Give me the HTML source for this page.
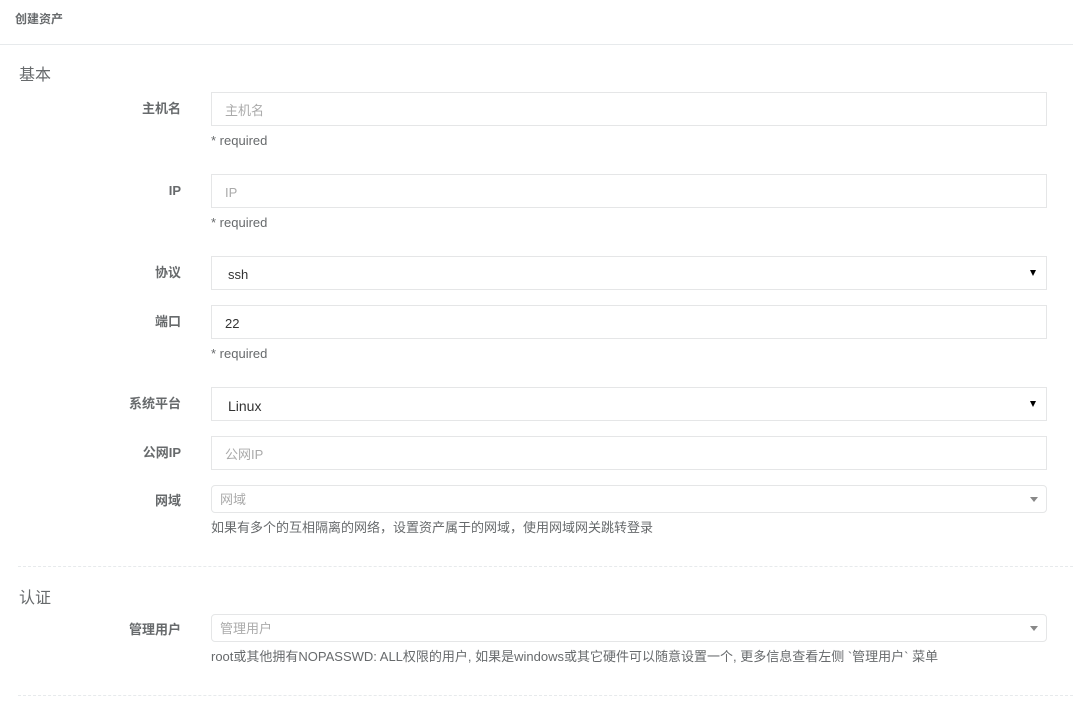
<!DOCTYPE html><html><head><meta charset="utf-8"><style>
body{margin:0;width:1073px;height:701px;background:#fff;font-family:"Liberation Sans","Noto Sans CJK SC",sans-serif;color:#676a6c;font-size:13px;position:relative;overflow:hidden}
.a{position:absolute}
.lbl{position:absolute;right:892px;font-weight:bold;font-size:13px;color:#676a6c;line-height:16px}
.in{position:absolute;left:211px;border:1px solid #e5e6e7;background:#fff;box-sizing:border-box;width:836px;padding-left:13px;font-size:13px;color:#333}
.ph{color:#aaa}
.req{position:absolute;left:211px;font-size:13px;color:#676a6c;line-height:16px}
.tri{position:absolute;right:10px;top:50%;margin-top:-3px;width:0;height:0;border-left:3.5px solid transparent;border-right:3.5px solid transparent;border-top:6px solid #000}
.tri2{position:absolute;right:8px;top:50%;margin-top:-2px;width:0;height:0;border-left:4px solid transparent;border-right:4px solid transparent;border-top:5px solid #888}
.dash{position:absolute;left:18px;right:0;border-top:1px dashed #e7eaec}
</style></head><body>
<div class="a" style="left:15px;top:10px;font-size:12px;font-weight:bold;color:#676a6c">创建资产</div>
<div class="a" style="left:0;right:0;top:44px;border-top:1px solid #e7eaec"></div>
<div class="a" style="left:19px;top:61px;font-size:16px;color:#676a6c">基本</div>

<div class="lbl" style="top:101px">主机名</div>
<div class="in" style="top:92px;height:34px;line-height:35px"><span class="ph">主机名</span></div>
<div class="req" style="top:133px">* required</div>

<div class="lbl" style="top:183px">IP</div>
<div class="in" style="top:174px;height:34px;line-height:35px"><span class="ph">IP</span></div>
<div class="req" style="top:215px">* required</div>

<div class="lbl" style="top:265px">协议</div>
<div class="in" style="top:256px;height:34px;line-height:35px;padding-left:16px">ssh<div class="tri"></div></div>

<div class="lbl" style="top:314px">端口</div>
<div class="in" style="top:305px;height:34px;line-height:35px">22</div>
<div class="req" style="top:346px">* required</div>

<div class="lbl" style="top:396px">系统平台</div>
<div class="in" style="top:387px;height:34px;line-height:36px;padding-left:16px;font-size:14px">Linux<div class="tri"></div></div>

<div class="lbl" style="top:445px">公网IP</div>
<div class="in" style="top:436px;height:34px;line-height:35px"><span class="ph">公网IP</span></div>

<div class="lbl" style="top:493px">网域</div>
<div class="in" style="top:485px;height:28px;line-height:28px;border-radius:4px;padding-left:8px"><span class="ph">网域</span><div class="tri2"></div></div>
<div class="req" style="top:520px">如果有多个的互相隔离的网络，设置资产属于的网域，使用网域网关跳转登录</div>

<div class="dash" style="top:566px"></div>
<div class="a" style="left:19px;top:584px;font-size:16px;color:#676a6c">认证</div>

<div class="lbl" style="top:622px">管理用户</div>
<div class="in" style="top:614px;height:28px;line-height:28px;border-radius:4px;padding-left:8px"><span class="ph">管理用户</span><div class="tri2"></div></div>
<div class="req" style="top:649px">root或其他拥有NOPASSWD: ALL权限的用户, 如果是windows或其它硬件可以随意设置一个, 更多信息查看左侧 `管理用户` 菜单</div>

<div class="dash" style="top:695px"></div>
</body></html>
